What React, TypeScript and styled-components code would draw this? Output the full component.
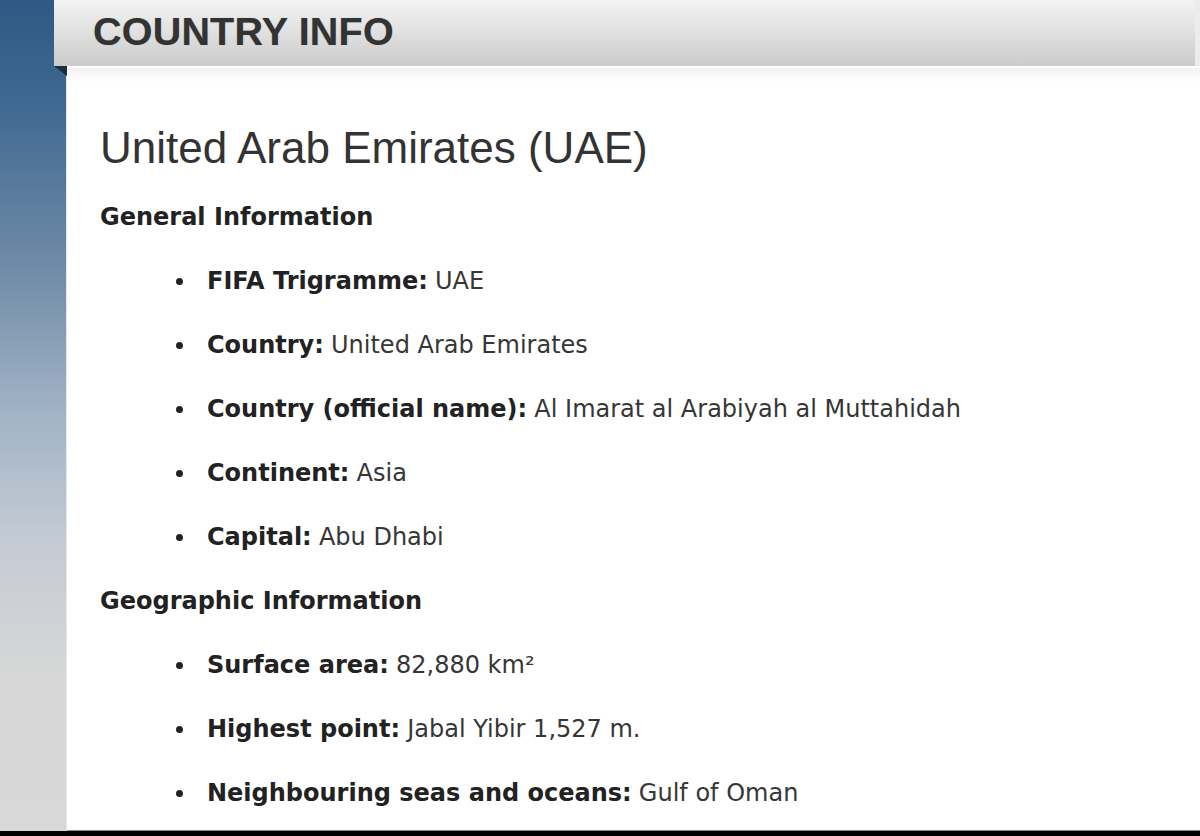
import React from "react";
import styled, { createGlobalStyle } from "styled-components";

const Global = createGlobalStyle`
  html, body { margin: 0; padding: 0; background: #ffffff; }
  body { width: 1200px; height: 836px; overflow: hidden; }
`;

const Page = styled.div`
  display: grid;
  grid-template-columns: 67px 1fr;
  height: 831px;
  border-bottom: 5px solid #000;
  box-shadow: inset 0 -1px 0 #888;
`;

const Sidebar = styled.div`
  background: linear-gradient(
    to bottom,
    #2d5984 0%,
    #3e6890 12%,
    #6f8ba7 32%,
    #a2b4c6 50%,
    #c6ccd4 66%,
    #d7d7d7 82%,
    #d8d8d8 100%
  );
  border-right: 1px solid #e6e6e6;
`;

const Main = styled.div`
  display: flex;
  flex-direction: column;
  min-width: 0;
`;

const HeaderBar = styled.div`
  position: relative;
  margin-left: -13px;
  height: 66px;
  display: flex;
  align-items: center;
  padding-left: 39px;
  background: linear-gradient(to bottom, #f3f3f3 0%, #e2e2e2 45%, #cbcbcb 100%);
  border-right: 5px solid #ececec;
  box-sizing: border-box;
`;

const Fold = styled.span`
  position: absolute;
  left: 0;
  top: 66px;
  width: 0;
  height: 0;
  border-top: 10px solid #1c2d40;
  border-left: 13px solid transparent;
`;

const HeaderTitle = styled.h1`
  margin: 0;
  font-family: "Liberation Sans", Arial, sans-serif;
  font-weight: bold;
  font-size: 39.5px;
  color: #333333;
  letter-spacing: 0.2px;
  line-height: 1;
  margin-top: -3px;
  text-shadow: 0 0 1px rgba(40, 40, 40, 0.35);
`;

const HeaderShade = styled.div`
  height: 14px;
  border-top: 2px solid #ffffff;
  background: linear-gradient(to bottom, #f2f2f2, #ffffff);
`;

const Content = styled.div`
  padding: 29px 0 0 33px;
  color: #333333;
  font-family: "DejaVu Sans", Verdana, sans-serif;
`;

const TitleBlock = styled.div`
  height: 74px;
  display: flex;
  align-items: center;
`;

const Title = styled.h2`
  margin: 0;
  font-family: "Liberation Sans", Arial, sans-serif;
  font-weight: normal;
  font-size: 44px;
  line-height: 50px;
  color: #333333;
`;

const SectionHeading = styled.h3`
  margin: 0;
  font-size: 24px;
  font-weight: bold;
  line-height: 30px;
  height: 64px;
  display: flex;
  align-items: center;
  color: #222222;
`;

const List = styled.ul`
  margin: 0;
  padding: 0 0 0 107px;
  list-style: none;
`;

const Item = styled.li`
  position: relative;
  height: 64px;
  display: flex;
  align-items: center;
  font-size: 24px;
  line-height: 30px;
  color: #363636;
  white-space: nowrap;

  &::before {
    content: "";
    position: absolute;
    left: -31px;
    top: 50%;
    width: 7px;
    height: 7px;
    margin-top: -3px;
    border-radius: 50%;
    background: #222222;
  }
`;

const Label = styled.b`
  font-weight: bold;
  color: #222222;
  margin-right: 0.3em;
`;

type Row = { label: string; value: string };

const general: Row[] = [
  { label: "FIFA Trigramme:", value: "UAE" },
  { label: "Country:", value: "United Arab Emirates" },
  { label: "Country (official name):", value: "Al Imarat al Arabiyah al Muttahidah" },
  { label: "Continent:", value: "Asia" },
  { label: "Capital:", value: "Abu Dhabi" },
];

const geographic: Row[] = [
  { label: "Surface area:", value: "82,880 km²" },
  { label: "Highest point:", value: "Jabal Yibir 1,527 m." },
  { label: "Neighbouring seas and oceans:", value: "Gulf of Oman" },
];

export default function App() {
  return (
    <>
      <Global />
      <Page>
        <Sidebar />
        <Main>
          <HeaderBar>
            <HeaderTitle>COUNTRY INFO</HeaderTitle>
            <Fold />
          </HeaderBar>
          <HeaderShade />
          <Content>
            <TitleBlock>
              <Title>United Arab Emirates (UAE)</Title>
            </TitleBlock>
            <SectionHeading>General Information</SectionHeading>
            <List>
              {general.map((r) => (
                <Item key={r.label}>
                  <Label>{r.label}</Label>
                  {r.value}
                </Item>
              ))}
            </List>
            <SectionHeading>Geographic Information</SectionHeading>
            <List>
              {geographic.map((r) => (
                <Item key={r.label}>
                  <Label>{r.label}</Label>
                  {r.value}
                </Item>
              ))}
            </List>
          </Content>
        </Main>
      </Page>
    </>
  );
}
